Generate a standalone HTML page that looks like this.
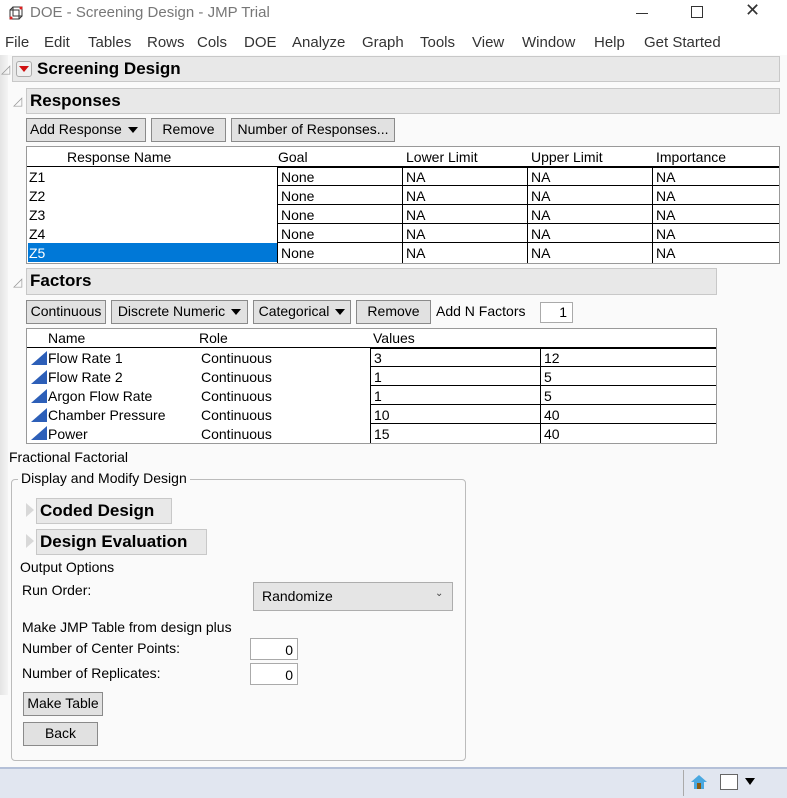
<!DOCTYPE html>
<html><head><meta charset="utf-8"><style>
*{margin:0;padding:0;box-sizing:border-box}
body{width:787px;height:798px;position:relative;overflow:hidden;background:#fafafa;font-family:"Liberation Sans",sans-serif;font-size:14px;color:#000}
.a{position:absolute;white-space:nowrap}
.hdr{position:absolute;background:#e8e8e8;border:1px solid #c8c8c8;font-weight:bold;font-size:17px;padding-left:3px;line-height:23px}
.btn{position:absolute;background:#e1e1e1;border:1px solid #8a8a8a;font-size:14px;line-height:21px;padding:0 3px;text-align:center}
.tri{position:absolute;width:0;height:0}
.cell{position:absolute;border:1px solid #000;background:#fff;padding-left:3px;line-height:17px;height:19px}
.dd:after{content:"";display:inline-block;border-left:5px solid transparent;border-right:5px solid transparent;border-top:6px solid #000;margin-left:6px;vertical-align:middle}
.menu span{position:absolute;top:34px;font-size:15px;color:#333}
.exp{position:absolute;width:0;height:0;border-top:7px solid transparent;border-bottom:7px solid transparent;border-left:8px solid #d8d8d8}
.ftri{position:absolute;width:0;height:0;border-left:16px solid transparent;border-bottom:14px solid #2d5fb8}
</style></head><body>
<!-- title bar -->
<div class="a" style="left:0;top:0;width:787px;height:28px;background:#fff"></div>
<svg class="a" style="left:8px;top:5px" width="16" height="16"><rect x="2" y="5" width="9" height="9" fill="none" stroke="#333"/><rect x="5" y="2" width="9" height="9" fill="none" stroke="#333"/><line x1="2" y1="5" x2="5" y2="2" stroke="#333"/><line x1="11" y1="14" x2="14" y2="11" stroke="#333"/><circle cx="13" cy="3" r="1.5" fill="#d22"/><circle cx="3" cy="13" r="1.5" fill="#d22"/></svg>
<div class="a" style="left:30px;top:4px;font-size:15px;color:#777">DOE - Screening Design - JMP Trial</div>
<div class="a" style="left:636px;top:4px;width:12px;border-top:1px solid #333;top:13px"></div>
<div class="a" style="left:691px;top:6px;width:12px;height:12px;border:1px solid #333"></div>
<div class="a" style="left:745px;top:0;font-size:18px;color:#333">✕</div>
<!-- menu -->
<div class="a" style="left:0;top:28px;width:787px;height:27px;background:#fff"></div>
<div class="menu"><span style="left:5px">File</span><span style="left:44px">Edit</span><span style="left:88px">Tables</span><span style="left:147px">Rows</span><span style="left:197px">Cols</span><span style="left:244px">DOE</span><span style="left:292px">Analyze</span><span style="left:362px">Graph</span><span style="left:420px">Tools</span><span style="left:472px">View</span><span style="left:522px">Window</span><span style="left:594px">Help</span><span style="left:644px">Get Started</span></div>
<div class="a" style="left:0;top:55px;width:8px;height:640px;background:linear-gradient(90deg,#e4e4e4,#f4f4f4)"></div>
<!-- Screening design -->
<div class="a" style="left:1px;top:62px;color:#999;font-size:12px">◿</div>
<div class="hdr" style="left:12px;top:56px;width:768px;height:26px;padding-left:24px">Screening Design</div>
<div class="a" style="left:16px;top:61px;width:16px;height:16px;border:1px solid #aaa;border-radius:3px;background:#f0f0f0"></div>
<div class="tri" style="left:19px;top:66px;border-left:5px solid transparent;border-right:5px solid transparent;border-top:6px solid #d01010"></div>
<!-- Responses -->
<div class="a" style="left:13px;top:94px;color:#999;font-size:12px">◿</div>
<div class="hdr" style="left:26px;top:88px;width:754px;height:26px">Responses</div>
<div class="btn dd" style="left:26px;top:118px;width:120px;height:24px;text-align:left">Add Response</div>
<div class="btn" style="left:151px;top:118px;width:75px;height:24px">Remove</div>
<div class="btn" style="left:231px;top:118px;width:164px;height:24px">Number of Responses...</div>
<div class="a" style="left:26px;top:146px;width:754px;height:118px;border:1px solid #999;background:#fff"></div>
<div class="a" style="left:67px;top:149px">Response Name</div>
<div class="a" style="left:278px;top:149px">Goal</div>
<div class="a" style="left:406px;top:149px">Lower Limit</div>
<div class="a" style="left:531px;top:149px">Upper Limit</div>
<div class="a" style="left:656px;top:149px">Importance</div>
<div class="a" style="left:27px;top:166px;width:752px;border-top:1px solid #000"></div>
<div class="a" style="left:28px;top:243px;width:249px;height:19px;background:#0078d7"></div>
<div class="a" style="left:29px;top:168px;line-height:19px">Z1<br>Z2<br>Z3<br>Z4<br><span style="color:#fff">Z5</span></div>
<div class="cell" style="left:277px;top:167px;width:126px;height:96px;line-height:19px;border-bottom:none">None<br>None<br>None<br>None<br>None</div>
<div class="cell" style="left:402px;top:167px;width:126px;height:96px;line-height:19px;border-bottom:none">NA<br>NA<br>NA<br>NA<br>NA</div>
<div class="cell" style="left:527px;top:167px;width:126px;height:96px;line-height:19px;border-bottom:none">NA<br>NA<br>NA<br>NA<br>NA</div>
<div class="cell" style="left:652px;top:167px;width:127px;height:96px;line-height:19px;border-bottom:none;border-right:none">NA<br>NA<br>NA<br>NA<br>NA</div>
<div class="a" style="left:277px;top:185px;width:502px;border-top:1px solid #000"></div>
<div class="a" style="left:277px;top:204px;width:502px;border-top:1px solid #000"></div>
<div class="a" style="left:277px;top:223px;width:502px;border-top:1px solid #000"></div>
<div class="a" style="left:277px;top:242px;width:502px;border-top:1px solid #000"></div>
<!-- Factors -->
<div class="a" style="left:13px;top:275px;color:#999;font-size:12px">◿</div>
<div class="hdr" style="left:26px;top:268px;width:691px;height:27px">Factors</div>
<div class="btn" style="left:26px;top:300px;width:80px;height:24px">Continuous</div>
<div class="btn dd" style="left:111px;top:300px;width:137px;height:24px">Discrete Numeric</div>
<div class="btn dd" style="left:253px;top:300px;width:98px;height:24px">Categorical</div>
<div class="btn" style="left:356px;top:300px;width:75px;height:24px">Remove</div>
<div class="a" style="left:436px;top:303px">Add N Factors</div>
<div class="a" style="left:540px;top:302px;width:33px;height:21px;border:1px solid #aaa;background:#fff;text-align:right;padding-right:5px;line-height:19px">1</div>
<div class="a" style="left:26px;top:328px;width:691px;height:116px;border:1px solid #999;background:#fff"></div>
<div class="a" style="left:48px;top:330px">Name</div>
<div class="a" style="left:199px;top:330px">Role</div>
<div class="a" style="left:373px;top:330px">Values</div>
<div class="a" style="left:27px;top:347px;width:689px;border-top:1px solid #000"></div>
<div class="ftri" style="left:31px;top:351px"></div><div class="ftri" style="left:31px;top:370px"></div><div class="ftri" style="left:31px;top:389px"></div><div class="ftri" style="left:31px;top:408px"></div><div class="ftri" style="left:31px;top:426px"></div>
<div class="a" style="left:48px;top:349px;line-height:19px">Flow Rate 1<br>Flow Rate 2<br>Argon Flow Rate<br>Chamber Pressure<br>Power</div>
<div class="a" style="left:201px;top:349px;line-height:19px">Continuous<br>Continuous<br>Continuous<br>Continuous<br>Continuous</div>
<div class="cell" style="left:370px;top:348px;width:171px;height:95px;line-height:19px;border-bottom:none">3<br>1<br>1<br>10<br>15</div>
<div class="cell" style="left:540px;top:348px;width:176px;height:95px;line-height:19px;border-bottom:none;border-right:none">12<br>5<br>5<br>40<br>40</div>
<div class="a" style="left:370px;top:366px;width:346px;border-top:1px solid #000"></div>
<div class="a" style="left:370px;top:385px;width:346px;border-top:1px solid #000"></div>
<div class="a" style="left:370px;top:404px;width:346px;border-top:1px solid #000"></div>
<div class="a" style="left:370px;top:423px;width:346px;border-top:1px solid #000"></div>
<div class="a" style="left:9px;top:449px">Fractional Factorial</div>
<!-- group -->
<div class="a" style="left:11px;top:479px;width:455px;height:282px;border:1px solid #bbb;border-radius:4px"></div>
<div class="a" style="left:18px;top:470px;background:#fafafa;padding:0 3px">Display and Modify Design</div>
<div class="exp" style="left:26px;top:503px"></div>
<div class="hdr" style="left:36px;top:498px;width:136px;height:26px">Coded Design</div>
<div class="exp" style="left:26px;top:534px"></div>
<div class="hdr" style="left:36px;top:529px;width:171px;height:26px">Design Evaluation</div>
<div class="a" style="left:20px;top:559px">Output Options</div>
<div class="a" style="left:22px;top:582px">Run Order:</div>
<div class="a" style="left:253px;top:582px;width:200px;height:29px;background:#e5e5e5;border:1px solid #adadad;padding-left:8px;line-height:27px">Randomize</div>
<div class="a" style="left:435px;top:588px;font-size:10px;color:#444">&#8964;</div>
<div class="a" style="left:22px;top:619px">Make JMP Table from design plus</div>
<div class="a" style="left:22px;top:640px">Number of Center Points:</div>
<div class="a" style="left:250px;top:638px;width:48px;height:22px;border:1px solid #aaa;background:#fff;text-align:right;padding-right:4px;line-height:22px">0</div>
<div class="a" style="left:22px;top:665px">Number of Replicates:</div>
<div class="a" style="left:250px;top:663px;width:48px;height:22px;border:1px solid #aaa;background:#fff;text-align:right;padding-right:4px;line-height:22px">0</div>
<div class="btn" style="left:23px;top:692px;width:80px;height:24px;padding:0">Make Table</div>
<div class="btn" style="left:23px;top:722px;width:75px;height:24px">Back</div>
<!-- status -->
<div class="a" style="left:0;top:767px;width:787px;height:31px;background:#e1e6f0;border-top:2px solid #b4c0d8"></div>
<div class="a" style="left:683px;top:770px;height:26px;border-left:1px solid #aaa"></div>
<svg class="a" style="left:690px;top:774px" width="18" height="16"><path d="M9 1 L17 8 L14 8 L14 15 L4 15 L4 8 L1 8 Z" fill="#4aa8e0"/><rect x="7" y="9" width="4" height="6" fill="#8a5a10"/></svg>
<div class="a" style="left:720px;top:774px;width:18px;height:16px;border:1px solid #666;background:#fff"></div>
<div class="tri" style="left:745px;top:778px;border-left:5px solid transparent;border-right:5px solid transparent;border-top:7px solid #000"></div>
</body></html>
